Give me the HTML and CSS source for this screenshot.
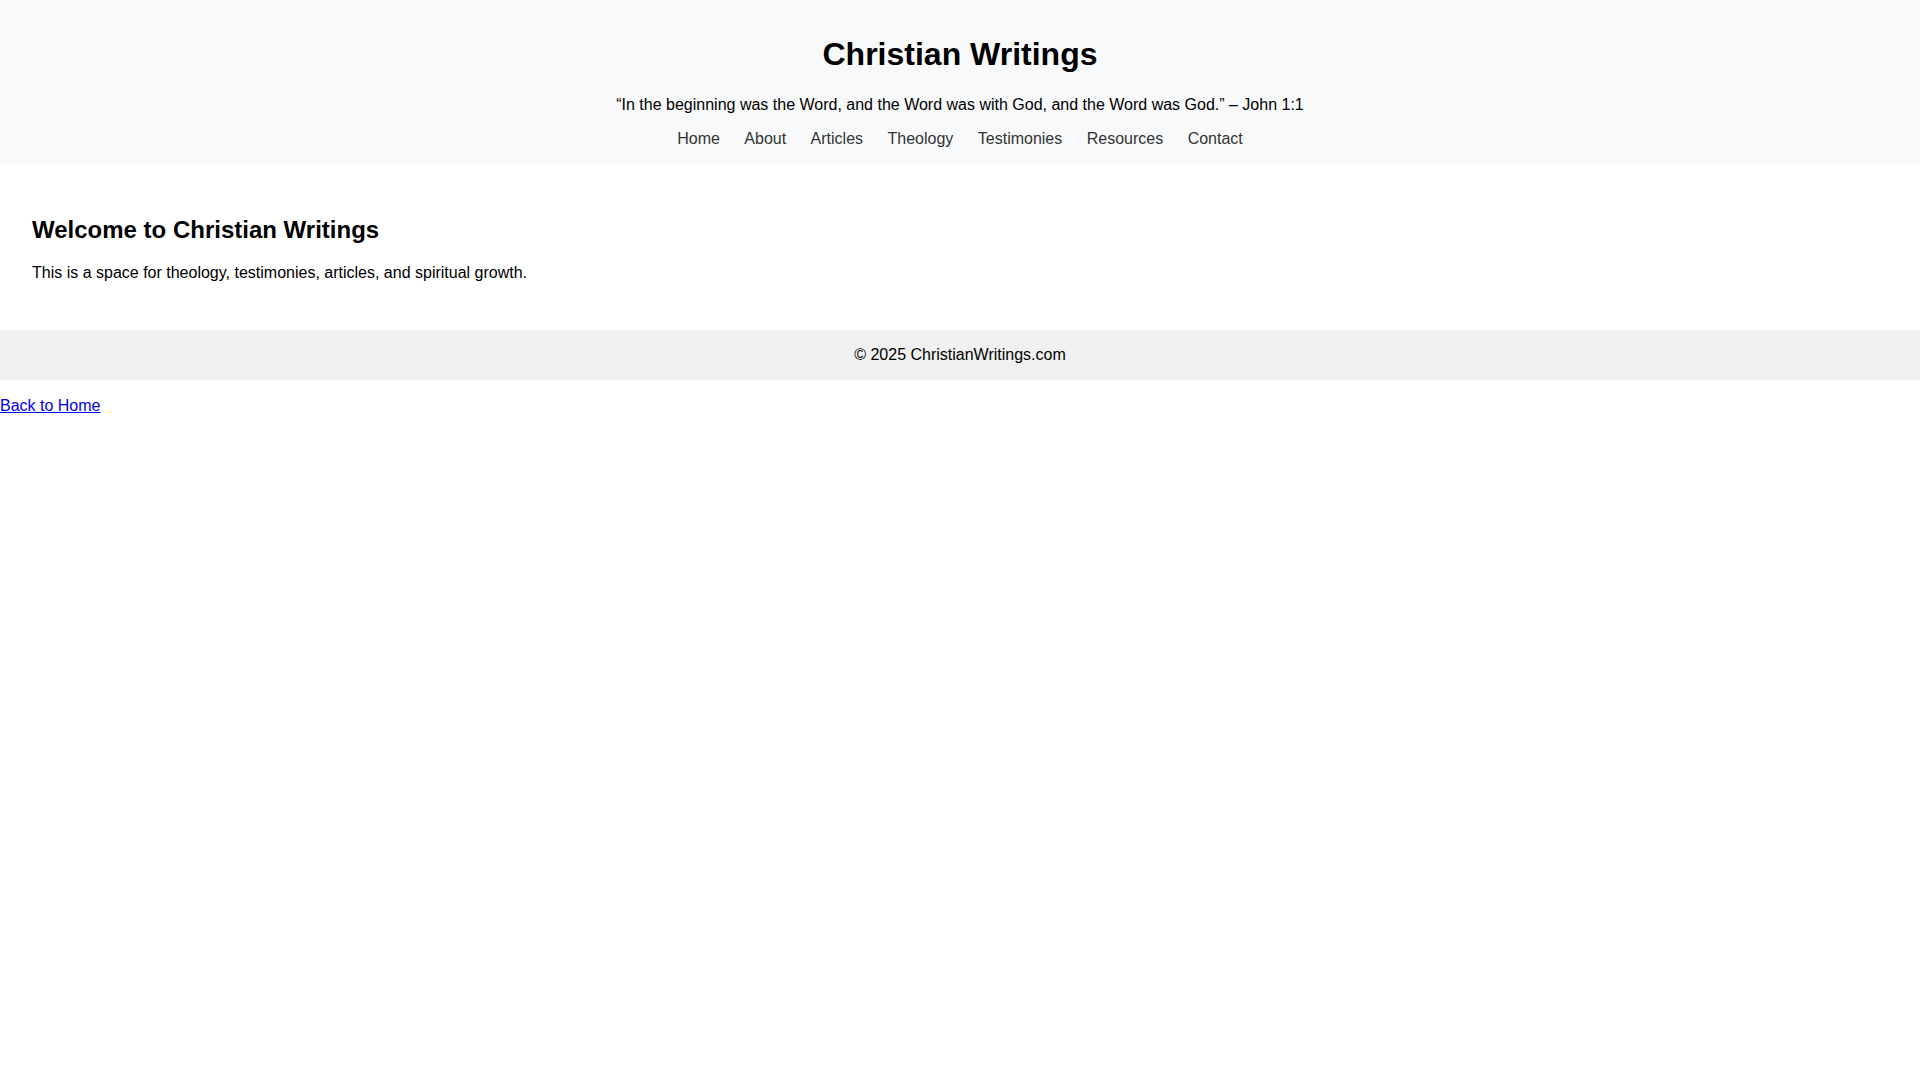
FILE: index.html
```html
<!DOCTYPE html>
<html lang="en">
<head>
<meta charset="utf-8">
<title>Christian Writings</title>
<link rel="stylesheet" href="styles.css">
</head>
<body>
<header class="site-header">
  <h1 class="site-title">Christian Writings</h1>
  <p class="verse">“In the beginning was the Word, and the Word was with God, and the Word was God.” – John 1:1</p>
  <nav class="site-nav">
    <a href="#">Home</a>
    <a href="#">About</a>
    <a href="#">Articles</a>
    <a href="#">Theology</a>
    <a href="#">Testimonies</a>
    <a href="#">Resources</a>
    <a href="#">Contact</a>
  </nav>
</header>
<main class="content">
  <h2 class="welcome">Welcome to Christian Writings</h2>
  <p class="intro">This is a space for theology, testimonies, articles, and spiritual growth.</p>
</main>
<footer class="site-footer">
  <p class="copy">© 2025 ChristianWritings.com</p>
</footer>
<p class="back"><a href="#">Back to Home</a></p>
</body>
</html>
```

FILE: styles.css
```css
body {
  margin: 0;
  font-family: "Liberation Sans", Arial, sans-serif;
  font-size: 16px;
  color: #000;
  background: #fff;
}

.site-header {
  background: #f8f9fa;
  padding: 16px 0;
  text-align: center;
}

.site-title {
  font-size: 32px;
  margin: 20px 0 23px;
}

.verse {
  margin: 16px 0;
}

.site-nav a {
  margin: 0 10px;
  color: #333;
  text-decoration: none;
}

.content {
  padding: 32px;
}

.welcome {
  font-size: 24px;
  margin: 19.92px 0;
}

.intro {
  margin: 16px 0;
}

.site-footer {
  background: #f0f0f0;
  text-align: center;
  padding: 16px;
}

.copy {
  margin: 0;
}

.back {
  margin: 17px 0 16px;
}

.back a {
  color: #0000ee;
}
```
